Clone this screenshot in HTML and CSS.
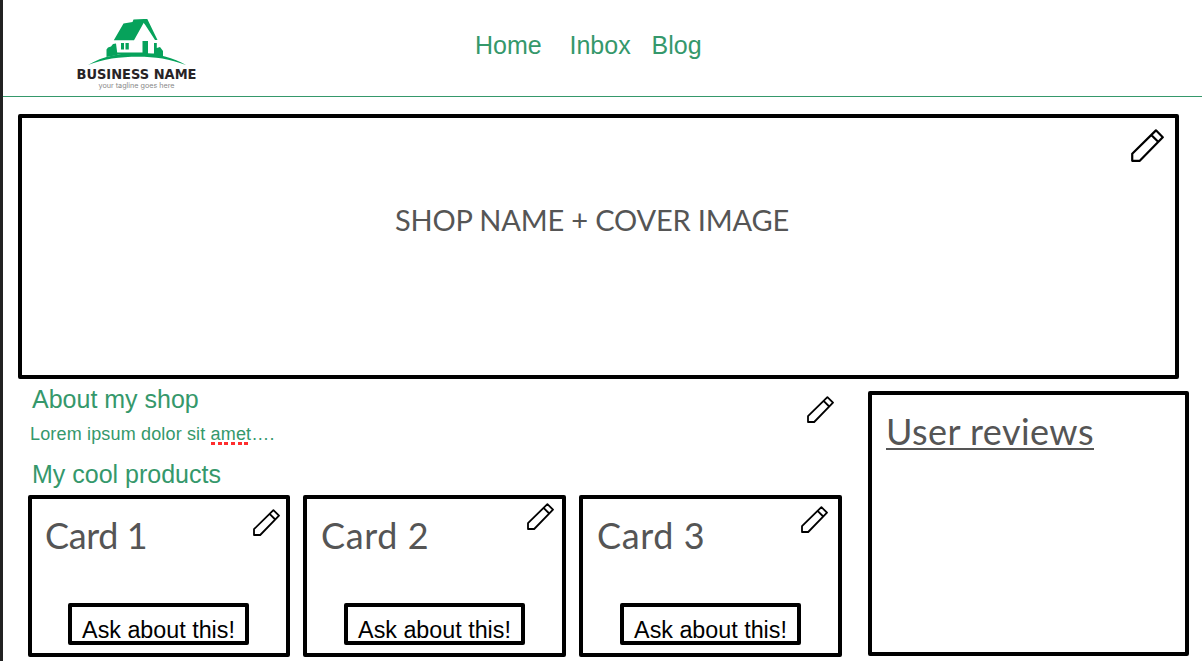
FILE: index.html
```html
<!DOCTYPE html>
<html lang="en">
<head>
<meta charset="utf-8">
<title>Shop page</title>
<link rel="stylesheet" href="styles.css">
</head>
<body>
<svg width="0" height="0" class="defs" aria-hidden="true">
  <symbol id="pencil" viewBox="0 0 27 27">
    <path d="M1 26V20.2L20.4 1.1L26 6.7L7.2 26ZM16.600 4.900L22.200 10.500" fill="none" stroke="#000" stroke-width="1.8" stroke-linejoin="round"/>
  </symbol>
</svg>
<div class="page">
  <header class="header">
    <svg class="logo" viewBox="0 0 150 95" role="img">
      <g fill="#06a25b">
        <path d="M53.800 35.300L63.500 18.500L72.500 17L73.500 14.500L84 14L85 15.500L74 35.300Z"/>
        <path d="M83 14H87.300L97.500 35H95L85.300 20L83 17Z"/>
        <path d="M28 60C43 51 60 48 78 48C98 48 114 53 126 60C110 54 95 51.800 78 51.800C60 51.800 43 54 28 60Z"/>
        <path d="M46.500 52V44.500L48 42.500L51 41.500L53 39L56 38.500L57.500 50Z"/>
        <path d="M57 47.500H82.500V36H88V48.500H94V38H96.800V43L100 42L103 46V51L92 51L75 49.500H57Z"/>
        <path d="M61 38H64V44.500H61ZM65.500 38H68.800V44.500H65.500Z"/>
      </g>
      <text class="logo-name" x="16.500" y="74" textLength="120" lengthAdjust="spacingAndGlyphs">BUSINESS NAME</text>
      <text class="logo-tagline" x="38.500" y="83" textLength="76" lengthAdjust="spacingAndGlyphs">your tagline goes here</text>
    </svg>
    <nav class="nav">
      <a class="nav-home">Home</a>
      <a class="nav-inbox">Inbox</a>
      <a>Blog</a>
    </nav>
  </header>
  <main class="content">
    <section class="box cover">
      <h1 class="cover-title">SHOP NAME + COVER IMAGE</h1>
      <svg class="pencil pencil-large"><use href="#pencil"/></svg>
    </section>
    <div class="columns">
      <div class="shop">
        <section class="about">
          <div>
            <h2 class="heading">About my shop</h2>
            <p class="lorem">Lorem ipsum dolor sit <span class="misspelled">amet</span>….</p>
          </div>
          <svg class="pencil pencil-about"><use href="#pencil"/></svg>
        </section>
        <h2 class="heading products-heading">My cool products</h2>
        <div class="cards">
          <article class="box card card-first">
            <h3 class="title">Card 1</h3>
            <svg class="pencil pencil-low"><use href="#pencil"/></svg>
            <button class="box ask">Ask about this!</button>
          </article>
          <article class="box card">
            <h3 class="title">Card 2</h3>
            <svg class="pencil pencil-high"><use href="#pencil"/></svg>
            <button class="box ask">Ask about this!</button>
          </article>
          <article class="box card">
            <h3 class="title">Card 3</h3>
            <svg class="pencil pencil-mid"><use href="#pencil"/></svg>
            <button class="box ask">Ask about this!</button>
          </article>
        </div>
      </div>
      <aside class="box reviews">
        <h2 class="title reviews-title">User reviews</h2>
      </aside>
    </div>
  </main>
</div>
</body>
</html>
```
FILE: styles.css
```css
* { box-sizing: border-box; }
body, h1, h2, h3, p { margin: 0; font-weight: 400; }
body {
  background: #fff;
  color: #35986b;
  font-family: "Liberation Sans", Arial, sans-serif;
  overflow: hidden;
}
.defs { position: absolute; }
.page { height: 661px; border-left: 3px solid #222; }
.header {
  display: flex;
  height: 97px;
  border-bottom: 1px solid #35986b;
}
.logo { width: 150px; height: 95px; margin: 5px 0 0 57px; flex: none; }
.logo-name { font: 700 13.5px "DejaVu Sans", sans-serif; fill: #282426; }
.logo-tagline { font: 400 7px Inter, sans-serif; fill: #888; }
.nav {
  display: flex;
  margin: 30px 0 0 265px;
  font-size: 25px;
  line-height: 30px;
}
.nav-home { width: 94.5px; }
.nav-inbox { width: 82px; }
.content { padding: 17px 0 0 15px; }
.box { border: 4px solid #000; border-radius: 2px; background: #fff; }
.cover {
  display: flex;
  width: 1161px;
  height: 265px;
  justify-content: space-between;
  padding: 84px 11px 0 373px;
}
.cover-title {
  color: #555;
  font: 400 29px/35px Lato, sans-serif;
  letter-spacing: -0.17px;
  white-space: nowrap;
}
.pencil { width: 27px; height: 27px; flex: none; }
.pencil-large { width: 33px; height: 33px; margin-top: -73px; }
.columns { display: flex; gap: 26px; padding-left: 10px; }
.shop { width: 814px; padding-top: 5px; }
.about { display: flex; justify-content: space-between; height: 75px; padding: 0 8px 0 2px; }
.heading { padding-left: 2px; font-size: 25px; line-height: 30px; }
.lorem { margin-top: 9px; font-size: 18px; line-height: 22px; letter-spacing: 0.16px; }
.misspelled {
  padding-bottom: 1px;
  background: repeating-linear-gradient(90deg, #ff2d2d 0 4px, transparent 4px 6.7px) 0 100% / 38px 3px no-repeat;
}
.pencil-about { margin-top: 12px; }
.products-heading { padding-left: 4px; }
.cards { display: grid; grid-template-columns: 262px 263px 263px; gap: 13px; margin-top: 6px; }
.card {
  display: grid;
  grid-template: 104px 42px / 1fr auto;
  height: 162px;
  padding-left: 14px;
}
.title {
  margin-top: 15px;
  color: #555;
  font: 400 36px/42px Lato, sans-serif;
  letter-spacing: 0.6px;
  white-space: nowrap;
}
.card-first { padding-left: 13px; }
.card-first .title { letter-spacing: -0.4px; }
.pencil-low { margin: 10px 6px 0 0; }
.pencil-high { margin: 4px 8px 0 0; }
.pencil-mid { margin: 7px 10px 0 0; }
.ask {
  grid-column: 1 / 3;
  width: 181px;
  height: 42px;
  margin-left: 23px;
  padding: 9px 0 0;
  display: flex;
  justify-content: center;
  color: #000;
  font: 23.3px/28px "Liberation Sans", Arial, sans-serif;
  white-space: nowrap;
}
.reviews { width: 321px; height: 265px; margin-top: 12px; padding-left: 14px; }
.reviews-title {
  width: 208px;
  height: 40px;
  border-bottom: 2px solid #555;
  letter-spacing: 0.45px;
}
```
